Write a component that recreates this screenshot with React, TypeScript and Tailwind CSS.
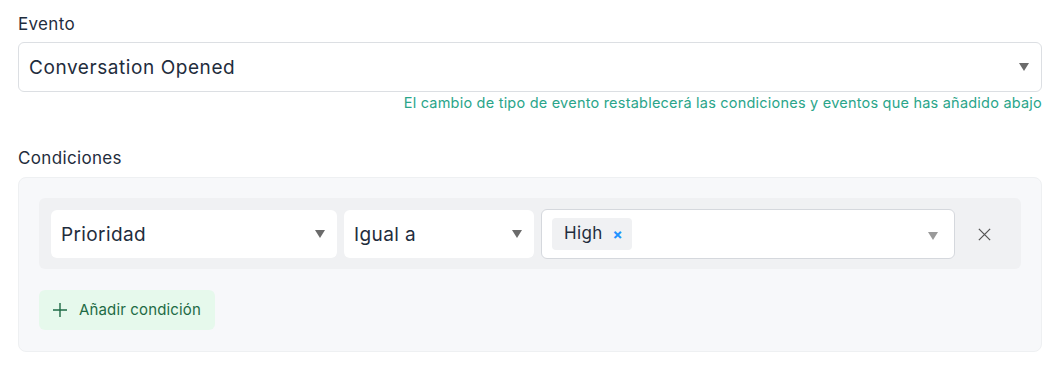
const Caret = ({ className = '' }: { className?: string }) => (
  <svg width="10" height="8" viewBox="0 0 10 8" className={className}>
    <path d="M0 0h10L5 8z" fill="currentColor" />
  </svg>
)

const SelectBox = ({ label, className = '' }: { label: string; className?: string }) => (
  <div className={`flex h-12 items-center justify-between rounded-md bg-white pl-[10px] pr-3 ${className}`}>
    <span className="pt-[3px] text-[19px] tracking-[0.02em] text-[#1f2d3d]">{label}</span>
    <Caret className="text-[#6b6b6b]" />
  </div>
)

const App = () => {
  return (
    <div className="w-[1056px] bg-white pl-[18px] pr-[14px] pt-[14px] font-['Inter',sans-serif] text-[#1f2d3d]">
      <label className="block text-[17px] leading-5 tracking-[0.02em]">Evento</label>
      <div className="mt-[8px] flex h-[50px] items-center justify-between rounded-md border border-[#dcdfe3] pl-[10px] pr-[12px]">
        <span className="pt-[3px] text-[19px] tracking-[0.03em]">Conversation Opened</span>
        <Caret className="text-[#6b6b6b]" />
      </div>
      <p className="mt-[1px] text-right text-[14.5px] leading-5 tracking-[0.015em] text-[#2aa58a]">
        El cambio de tipo de evento restablecerá las condiciones y eventos que has añadido abajo
      </p>

      <label className="mt-[35px] block text-[17px] leading-5 tracking-[0.02em]">Condiciones</label>
      <div className="mt-[9px] rounded-lg border border-[#eef0f2] bg-[#f7f8fa] px-5 pb-[21px] pt-5">
        <div className="flex items-center gap-[7px] rounded-md bg-[#f0f1f3] px-[12px] pb-[10px] pt-[11px]">
          <SelectBox label="Prioridad" className="w-[286px]" />
          <SelectBox label="Igual a" className="w-[190px]" />
          <div className="flex h-[50px] w-[414px] items-center justify-between rounded-md border border-[#d5d8dd] bg-white pl-[10px] pr-[16px]">
            <span className="flex h-8 items-center gap-[10px] rounded bg-[#f0f1f3] pl-3 pr-[9px] text-[17px] tracking-[0.02em]">
              High
              <span className="text-[15px] font-bold leading-none text-[#1f93ff]">×</span>
            </span>
            <Caret className="mt-[4px] text-[#9a9a9a]" />
          </div>
          <button className="ml-auto mr-[17px] text-[#555]">
            <svg width="15" height="15" viewBox="0 0 16 16" fill="none" stroke="currentColor" strokeWidth="1.4">
              <path d="M2 2l12 12M14 2L2 14" />
            </svg>
          </button>
        </div>
        <button className="mt-[21px] flex h-[40px] items-center gap-3 rounded-md bg-[#e6f9ec] px-[14px] text-[15px] tracking-[0.01em] text-[#1e6b45]">
          <svg width="14" height="14" viewBox="0 0 14 14" fill="none" stroke="currentColor" strokeWidth="1.4">
            <path d="M7 0v14M0 7h14" />
          </svg>
          Añadir condición
        </button>
      </div>
    </div>
  )
}

export default App
